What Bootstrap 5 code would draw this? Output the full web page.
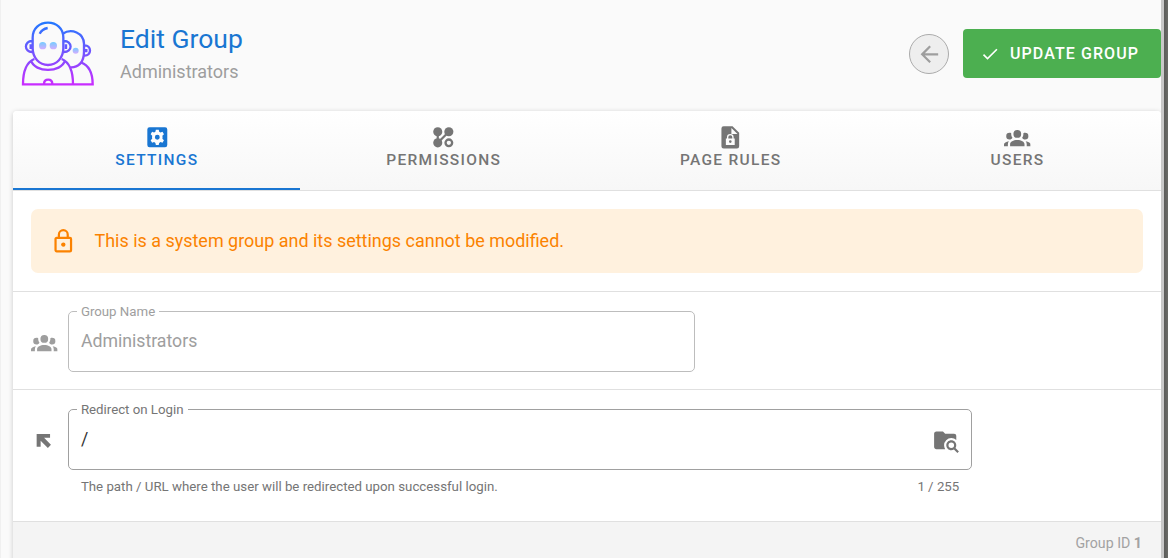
<!DOCTYPE html>
<html lang="en">
<head>
<meta charset="utf-8">
<title>Edit Group</title>
<link href="https://cdn.jsdelivr.net/npm/bootstrap@5.3.0/dist/css/bootstrap.min.css" rel="stylesheet">
<style>
body{font-family:Roboto,sans-serif;font-size:16px;background:#fafafa;color:#757575;width:1168px;height:558px;overflow:hidden;border-left:1px solid #f0f0f0}
svg{display:block;flex:none}
.mdi{width:26.6px;height:26.6px;fill:currentColor}
.page{width:1160px;height:558px}
.edge{width:7px;height:558px;border-left:3px solid #c8c8c8;background:linear-gradient(90deg,#5c5c5a,#6a6b67)}
.head{height:111px;padding:20px 0 0 19px}
.titles{margin-left:25px}
.titles h1{font-size:26.5px;line-height:32px;font-weight:400;color:#1976d2;margin:3px 0 0}
.titles div{font-size:18px;line-height:24px;color:#9e9e9e;margin-top:5px}
.back{width:40px;height:40px;border:1px solid #ababab;background:#eee;color:#9e9e9e;border-radius:50%;margin:14px 13.5px 0 0}
.update{width:198.5px;height:49px;margin-top:9px;background:#4caf50;border:0;border-radius:4px;color:#fff;font-size:16px;font-weight:500;letter-spacing:1.08px;padding:0 0 0 17px}
.update:hover{background:#4caf50;color:#fff}
.panel{margin-left:12.4px;height:460px;background:#fff;border-radius:4px 4px 0 0;box-shadow:0 1px 5px rgba(0,0,0,.2)}
.tabs{height:80px;background:linear-gradient(#fff,#f7f7f7);border-bottom:1px solid #e0e0e0;border-radius:4px 4px 0 0}
.tabs a{flex:1 1 0;color:#757575;text-decoration:none;font-size:15.5px;font-weight:500;letter-spacing:1.3px;line-height:18px;height:79px;padding-top:13.4px;border-bottom:2px solid transparent}
.tabs a.active{color:#1976d2;border-color:#1976d2}
.notice{height:101px;padding:18px 18px 0;border-bottom:1px solid #e0e0e0}
.note{height:64px;border-radius:7px;background:#fff1de;color:#fb8200;padding-left:19px;font-size:17.97px;margin:0;border:0}
.group{height:98px;border-bottom:1px solid #e0e0e0;padding:18px 0 0 18px;color:#9e9e9e}
.redirect{height:132px;border-bottom:1px solid #e0e0e0;padding:18px 0 0 18px}
.outline{margin:-8px 0 0;padding:0 12px;height:70px;border:1px solid #a0a0a0;border-radius:5px}
.outline legend{float:none;width:auto;margin:0 0 0 -4px;padding:2px 4px 0;font-size:13.25px;line-height:16px}
.group .outline{border-color:#bdbdbd}
.value{font-size:17.7px;line-height:24px;margin-top:9px}
.hint{font-size:13.27px;line-height:18px;padding:8px 13px 0}
.foot{height:37px;background:#f4f4f4;color:#a2a2a2;font-size:14.2px;line-height:22px;padding:10px 19px 0 0}
</style>
<script src="https://cdn.jsdelivr.net/npm/bootstrap@5.3.0/dist/js/bootstrap.bundle.min.js"></script>
</head>
<body class="d-flex">
<svg width="0" height="0" class="d-none"><symbol id="people" viewBox="0 0 24 24"><path d="M12,5.5A3.5,3.5 0 0,1 15.5,9A3.5,3.5 0 0,1 12,12.5A3.5,3.5 0 0,1 8.5,9A3.5,3.5 0 0,1 12,5.5M5,8C5.56,8 6.08,8.15 6.53,8.42C6.38,9.85 6.8,11.27 7.66,12.38C7.16,13.34 6.16,14 5,14A3,3 0 0,1 2,11A3,3 0 0,1 5,8M19,8A3,3 0 0,1 22,11A3,3 0 0,1 19,14C17.84,14 16.84,13.34 16.34,12.38C17.2,11.27 17.62,9.85 17.47,8.42C17.92,8.15 18.44,8 19,8M5.5,18.25C5.5,16.18 8.41,14.5 12,14.5C15.59,14.5 18.5,16.18 18.5,18.25V20H5.5V18.25M0,20V18.5C0,17.11 1.89,15.94 4.45,15.6C3.86,16.28 3.5,17.22 3.5,18.25V20H0V20M24,20H20.5V18.25C20.5,17.22 20.14,16.28 19.55,15.6C22.11,15.94 24,17.11 24,18.5V20Z"/></symbol></svg>
<main class="page flex-shrink-0">
<header class="head d-flex align-items-start">
<svg width="75" height="67" viewBox="60 60 225 201" fill="none" stroke="url(#tone)" stroke-width="7">
<defs><linearGradient id="tone" gradientUnits="userSpaceOnUse" x1="0" y1="65" x2="0" y2="256"><stop stop-color="#2079ff"/><stop offset="1" stop-color="#cb2cff"/></linearGradient>
<linearGradient id="eyes" x1="0" y1="0" x2="0" y2="1"><stop stop-color="#74cdff"/><stop offset="1" stop-color="#d5adff"/></linearGradient></defs>
<path d="M98 113C98 85 119 68 144 68S190 85 190 113V145C190 174 170 195 144 195S98 174 98 145ZM98 123C71 121 71 158 98 156M190 123C219 121 219 158 190 156M92 133V147M198 133V147"/>
<path d="M188 101C215 84 251 99 252 131V155C252 187 235 203 211 202M252 136C276 134 276 169 252 167M259 147V157"/>
<path d="M103 177C77 188 69 217 69 253H219C219 216 211 188 185 177M93 182C105 219 183 219 195 182M219 253H278C278 219 267 196 243 187M132 251C133 235 156 235 157 251"/>
<path d="M119 101Q126 87 143 84" stroke-width="7"/>
<g fill="url(#eyes)" stroke="none"><circle cx="128" cy="137" r="11"/><circle cx="160" cy="137" r="11"/><circle cx="227" cy="152" r="9"/></g>
</svg>
<div class="titles"><h1>Edit Group</h1><div>Administrators</div></div>
<button class="back btn p-0 ms-auto d-flex align-items-center justify-content-center" aria-label="Back"><svg class="mdi" viewBox="0 0 24 24"><path d="M20,11V13H8L13.5,18.5L12.08,19.92L4.16,12L12.08,4.08L13.5,5.5L8,11H20Z"/></svg></button>
<button class="update btn d-flex align-items-center"><svg width="20" height="20" viewBox="0 0 24 24" fill="#fff"><path d="M21,7L9,19L3.5,13.5L4.91,12.09L9,16.17L19.59,5.59L21,7Z"/></svg><span style="margin-left:10.5px">UPDATE GROUP</span></button>
</header>
<section class="panel">
<nav class="tabs d-flex">
<a class="active d-flex flex-column align-items-center" href="#"><svg class="mdi" viewBox="0 0 24 24"><path fill-rule="evenodd" d="M5 3H19A2 2 0 0 1 21 5V19A2 2 0 0 1 19 21H5A2 2 0 0 1 3 19V5A2 2 0 0 1 5 3M10.7 5.1L10.3 6.95L9.1 7.65L7.3 7.05L6 9.3L7.4 10.6Q7.1 12 7.4 13.4L6 14.7L7.3 16.95L9.1 16.35L10.3 17.05L10.7 18.9H13.3L13.7 17.05L14.9 16.35L16.7 16.95L18 14.7L16.6 13.4Q16.9 12 16.6 10.6L18 9.3L16.7 7.05L14.9 7.65L13.7 6.95L13.3 5.1ZM12 9.8A2.2 2.2 0 1 0 12 14.2A2.2 2.2 0 1 0 12 9.8Z"/></svg><span>SETTINGS</span></a>
<a class="d-flex flex-column align-items-center" href="#"><svg class="mdi" viewBox="0 0 24 24"><circle cx="7" cy="7" r="4.1"/><circle cx="17" cy="7" r="4.1"/><circle cx="7" cy="17" r="4.1"/><path d="M7 7V17L17 7" fill="none" stroke="currentColor" stroke-width="2"/><circle cx="17" cy="17" r="3" fill="none" stroke="currentColor" stroke-width="2.1"/></svg><span>PERMISSIONS</span></a>
<a class="d-flex flex-column align-items-center" href="#"><svg class="mdi" viewBox="0 0 24 24"><path fill-rule="evenodd" d="M6 2H14L20 8V20A2 2 0 0 1 18 22H6A2 2 0 0 1 4 20V4A2 2 0 0 1 6 2M13 3.5V9H18.5ZM8 13H9V12A3 3 0 0 1 15 12V13H16V19H8ZM10.2 13H13.8V12A1.8 1.8 0 0 0 10.2 12ZM12 14.7A1.2 1.2 0 1 0 12 17.1A1.2 1.2 0 1 0 12 14.7Z"/></svg><span>PAGE RULES</span></a>
<a class="d-flex flex-column align-items-center" href="#"><svg class="mdi"><use href="#people"/></svg><span>USERS</span></a>
</nav>
<div class="notice"><div class="note alert py-0 d-flex align-items-center"><svg class="mdi" viewBox="0 0 24 24"><path d="M12,17C10.89,17 10,16.1 10,15C10,13.89 10.89,13 12,13A2,2 0 0,1 14,15A2,2 0 0,1 12,17M18,20V10H6V20H18M18,8A2,2 0 0,1 20,10V20A2,2 0 0,1 18,22H6C4.89,22 4,21.1 4,20V10C4,8.89 4.89,8 6,8H7V6A5,5 0 0,1 12,1A5,5 0 0,1 17,6V8H18M12,3A3,3 0 0,0 9,6V8H15V6A3,3 0 0,0 12,3Z"/></svg><span style="margin-left:17.5px">This is a system group and its settings cannot be modified.</span></div></div>
<div class="group d-flex align-items-start"><svg class="mdi" style="margin-top:19px"><use href="#people"/></svg>
<fieldset class="outline" style="width:627.4px;margin-left:9.9px"><legend>Group Name</legend><div class="value">Administrators</div></fieldset></div>
<div class="redirect d-flex align-items-start"><svg class="mdi" style="margin-top:20px" viewBox="0 0 24 24"><path d="M5.1 5.5H17.2V8.9H11.8L18 15.2L15.2 18L8.7 11.6V17H5.1Z"/></svg>
<div style="width:904.4px;margin-left:9.9px"><fieldset class="outline"><legend>Redirect on Login</legend><div class="value d-flex justify-content-between" style="color:#333"><span>/</span><svg class="mdi" style="color:#757575" viewBox="0 0 24 24"><path d="M16.5,12C19,12 21,14 21,16.5C21,17.38 20.75,18.21 20.31,18.9L23.39,22L22,23.39L18.88,20.32C18.19,20.75 17.37,21 16.5,21C14,21 12,19 12,16.5C12,14 14,12 16.5,12M16.5,14A2.5,2.5 0 0,0 14,16.5A2.5,2.5 0 0,0 16.5,19A2.5,2.5 0 0,0 19,16.5A2.5,2.5 0 0,0 16.5,14M9,4L11,6H19A2,2 0 0,1 21,8V11.81C19.83,10.69 18.25,10 16.5,10A6.5,6.5 0 0,0 10,16.5C10,17.79 10.37,19 11,20H3C1.89,20 1,19.1 1,18V6C1,4.89 1.89,4 3,4H9Z"/></svg></div></fieldset><div class="hint d-flex justify-content-between"><span>The path / URL where the user will be redirected upon successful login.</span><span>1 / 255</span></div></div></div>
<footer class="foot text-end">Group ID <strong>1</strong></footer>
</section>
</main>
<div class="edge flex-shrink-0"></div>
</body>
</html>
